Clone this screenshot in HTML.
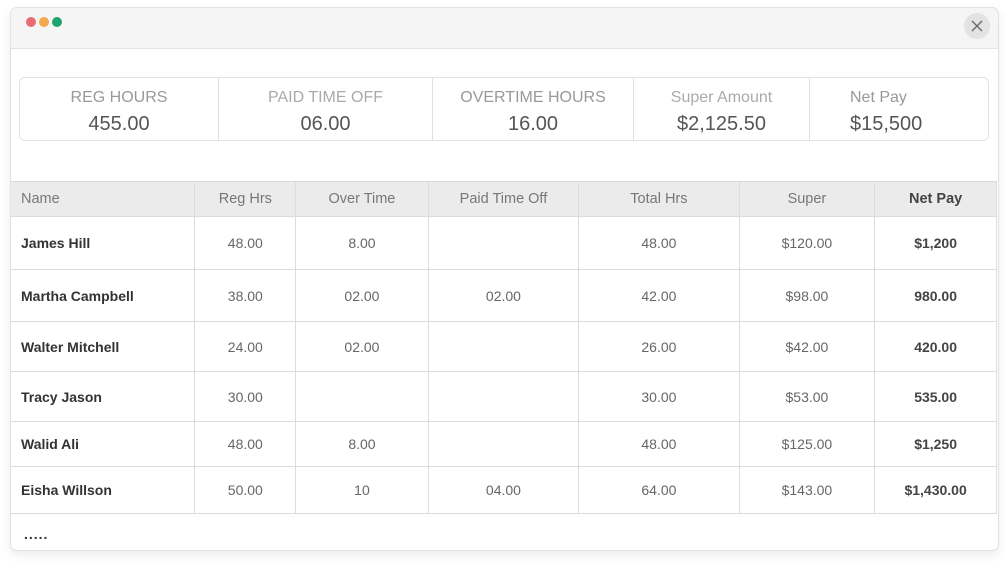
<!DOCTYPE html>
<html><head><style>
*{margin:0;padding:0;box-sizing:border-box}
body{width:1008px;height:568px;background:#fff;font-family:"Liberation Sans",sans-serif;position:relative;overflow:hidden}
.win{position:absolute;left:10px;top:7px;width:989px;height:544px;border:1px solid #e2e2e2;border-radius:7px;background:#fff;box-shadow:0 4px 10px rgba(0,0,0,.08);overflow:hidden}
.title{position:absolute;left:0;top:0;width:100%;height:41px;background:#f5f5f5;border-bottom:1.5px solid #e3e3e3}
.dot{position:absolute;top:9px;width:10px;height:10px;border-radius:50%}
.close{position:absolute;right:8px;top:5px;width:26px;height:26px;border-radius:50%;background:#e4e2e2}
.sum{position:absolute;left:8px;top:69px;width:970px;height:64px;border:1px solid #e3e3e3;border-radius:6px}
.cell{position:absolute;top:0;height:62px;border-right:1px solid #e0e0e0;text-align:center}
.cell .l{margin-top:11px;font-size:16px;color:#999}
.cell .v{margin-top:6px;font-size:20px;color:#555}
table{position:absolute;left:-1px;top:173px;border-collapse:collapse;font-size:14px;color:#666}
td,th{border:1px solid #dcdcdc;text-align:center;font-weight:normal}
th{background:#ebebeb;height:35px;color:#777;font-size:14.5px}
td.n,th.n{text-align:left;padding-left:10px;font-weight:bold;color:#333}
th.n{font-weight:normal;color:#777}
td.b,th.b{font-weight:bold;color:#444}
</style></head><body>
<div class="win">
<div class="title">
<div class="dot" style="left:15px;background:#e96c72"></div>
<div class="dot" style="left:28px;background:#f2a84c"></div>
<div class="dot" style="left:41px;background:#1fa36d"></div>
<div class="close"><svg width="26" height="26"><path d="M8 8L18 18M18 8L8 18" stroke="#666" stroke-width="1.3"/></svg></div>
</div>
<div class="sum">
<div class="cell" style="left:0;width:199px"><div class="l">REG HOURS</div><div class="v">455.00</div></div>
<div class="cell" style="left:199px;width:214px"><div class="l" style="color:#aaa">PAID TIME OFF</div><div class="v">06.00</div></div>
<div class="cell" style="left:413px;width:201px"><div class="l">OVERTIME HOURS</div><div class="v">16.00</div></div>
<div class="cell" style="left:614px;width:176px"><div class="l" style="color:#aaa">Super Amount</div><div class="v">$2,125.50</div></div>
<div class="cell" style="left:790px;width:178px;border:none;text-align:left;padding-left:40px"><div class="l">Net Pay</div><div class="v">$15,500</div></div>
</div>
<table>
<tr><th class="n" style="width:185px">Name</th><th style="width:101px">Reg Hrs</th><th style="width:133px">Over Time</th><th style="width:151px">Paid Time Off</th><th style="width:161px">Total Hrs</th><th style="width:136px">Super</th><th class="b" style="width:122px">Net Pay</th></tr>
<tr style="height:53px"><td class="n">James Hill</td><td>48.00</td><td>8.00</td><td></td><td>48.00</td><td>$120.00</td><td class="b">$1,200</td></tr>
<tr style="height:52px"><td class="n">Martha Campbell</td><td>38.00</td><td>02.00</td><td>02.00</td><td>42.00</td><td>$98.00</td><td class="b">980.00</td></tr>
<tr style="height:50px"><td class="n">Walter Mitchell</td><td>24.00</td><td>02.00</td><td></td><td>26.00</td><td>$42.00</td><td class="b">420.00</td></tr>
<tr style="height:50px"><td class="n">Tracy Jason</td><td>30.00</td><td></td><td></td><td>30.00</td><td>$53.00</td><td class="b">535.00</td></tr>
<tr style="height:45px"><td class="n">Walid Ali</td><td>48.00</td><td>8.00</td><td></td><td>48.00</td><td>$125.00</td><td class="b">$1,250</td></tr>
<tr style="height:47px"><td class="n">Eisha Willson</td><td>50.00</td><td>10</td><td>04.00</td><td>64.00</td><td>$143.00</td><td class="b">$1,430.00</td></tr>
</table>
<div style="position:absolute;left:13px;top:518px;font-size:14px;font-weight:bold;color:#333;letter-spacing:1px">.....</div>
</div>
</body></html>
